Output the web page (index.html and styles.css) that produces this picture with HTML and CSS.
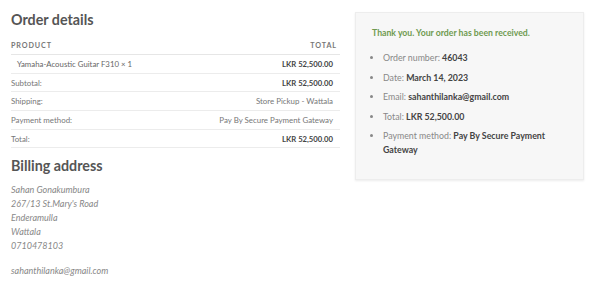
FILE: index.html
```html
<!DOCTYPE html>
<html>
<head>
<meta charset="utf-8">
<link rel="stylesheet" href="styles.css">
</head>
<body>
<div class="page">
  <div class="main">
    <h2 class="title">Order details</h2>
    <table class="order">
      <thead>
        <tr><th class="left">Product</th><th class="right">Total</th></tr>
      </thead>
      <tbody>
        <tr class="item"><td class="left prod">Yamaha-Acoustic Guitar F310 × 1</td><td class="right amt">LKR 52,500.00</td></tr>
        <tr><td class="left lbl">Subtotal:</td><td class="right amt">LKR 52,500.00</td></tr>
        <tr><td class="left lbl">Shipping:</td><td class="right val">Store Pickup - Wattala</td></tr>
        <tr><td class="left lbl">Payment method:</td><td class="right val">Pay By Secure Payment Gateway</td></tr>
        <tr><td class="left lbl">Total:</td><td class="right amt">LKR 52,500.00</td></tr>
      </tbody>
    </table>
    <h2 class="title billing">Billing address</h2>
    <address class="addr">
      <p>Sahan Gonakumbura<br>267/13 St.Mary's Road<br>Enderamulla<br>Wattala<br>0710478103</p>
      <p class="email">sahanthilanka@gmail.com</p>
    </address>
  </div>
  <aside class="card">
    <p class="thanks">Thank you. Your order has been received.</p>
    <ul class="info">
      <li>Order number: <strong>46043</strong></li>
      <li>Date: <strong>March 14, 2023</strong></li>
      <li>Email: <strong>sahanthilanka@gmail.com</strong></li>
      <li>Total: <strong>LKR 52,500.00</strong></li>
      <li>Payment method: <strong>Pay By Secure Payment Gateway</strong></li>
    </ul>
  </aside>
</div>
</body>
</html>
```

FILE: styles.css
```css
* { box-sizing: border-box; }
body {
  margin: 0;
  background: #fff;
  font-family: Lato, "Open Sans", sans-serif;
  color: #777;
}
.page {
  display: flex;
  align-items: flex-start;
  gap: 15px;
  padding: 0 0 0 11px;
}
.main {
  width: 329px;
  flex: none;
}
.title {
  margin: 9px 0 0 0;
  font-size: 14.3px;
  line-height: 22px;
  font-weight: 700;
  color: #555;
}
.order {
  width: 100%;
  border-collapse: collapse;
  margin-top: 10px;
}
.order th {
  font-size: 7.2px;
  font-weight: 700;
  text-transform: uppercase;
  letter-spacing: 0.9px;
  color: #777;
  padding: 0 3px 4px 0;
  height: 13px;
  border-bottom: 1px solid #e6e6e6;
}
.order td {
  height: 18.7px;
  padding: 0 7px 0 0;
  border-bottom: 1px solid #ececec;
  vertical-align: middle;
}
.left { text-align: left; }
.right { text-align: right; }
.prod {
  padding-left: 6px !important;
  font-size: 7.8px;
  color: #666;
}
.lbl, .val {
  font-size: 7.9px;
  color: #777;
}
.amt {
  font-size: 7.7px;
  font-weight: 700;
  color: #444;
}
.billing {
  margin-top: 8px;
  line-height: 20px;
}
.addr {
  margin-top: 7px;
  font-style: italic;
  font-size: 9px;
  line-height: 13.8px;
  color: #888;
}
.addr p { margin: 0; }
.addr .email { margin-top: 12px; }
.card {
  margin-top: 12px;
  width: 229px;
  height: 168px;
  flex: none;
  background: #f7f7f7;
  border: 1px solid #ededed;
  box-shadow: 0 1px 2px rgba(0,0,0,0.08);
  padding: 14px 16px;
}
.thanks {
  margin: 0;
  font-size: 8.7px;
  font-weight: 700;
  color: #6f9a50;
  line-height: 12px;
}
.info {
  margin: 12px 0 0 0;
  padding: 0 0 0 11px;
  font-size: 8.8px;
  color: #888;
  line-height: 14px;
}
.info li {
  margin-bottom: 5.5px;
}
.info strong {
  color: #444;
  font-weight: 700;
}
```
